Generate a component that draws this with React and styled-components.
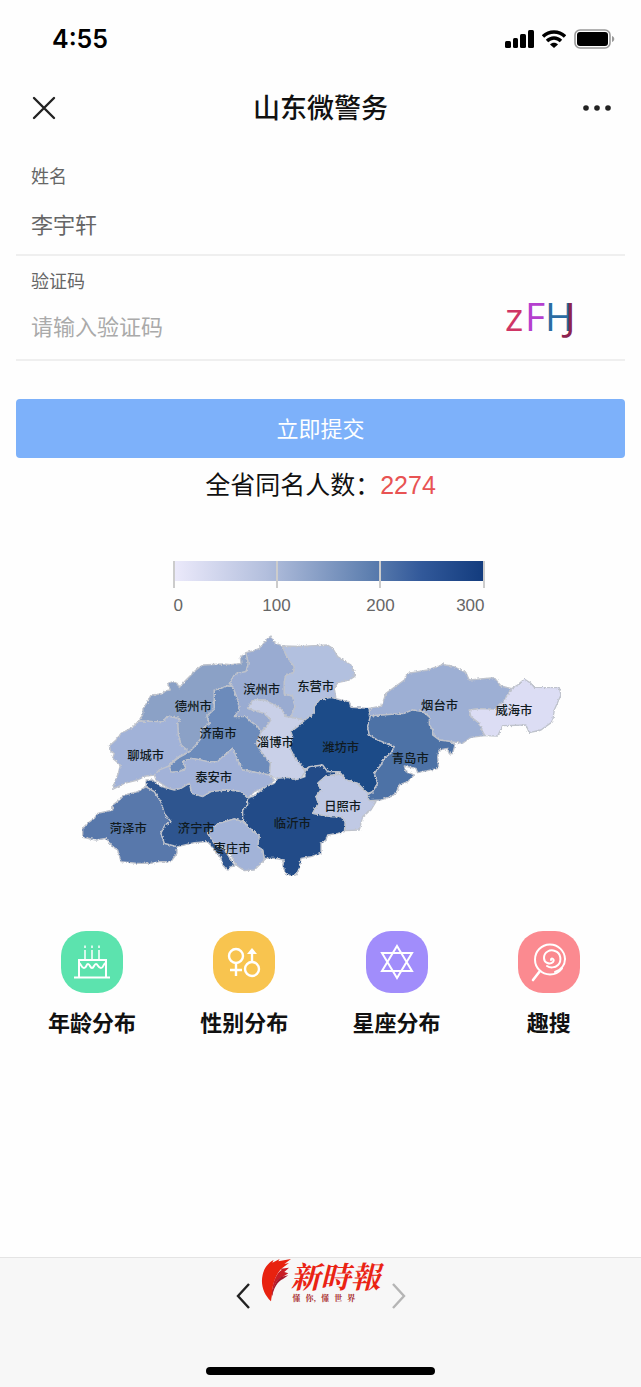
import React, { useState } from 'react';
import styled, { createGlobalStyle } from 'styled-components';

const GlobalStyle = createGlobalStyle`
  * {
    box-sizing: border-box;
  }
  body {
    margin: 0;
    background: #fefefe;
    color: #111;
    font-family: "Liberation Sans", "Noto Sans CJK SC", sans-serif;
  }
`;

const Page = styled.div`
  display: flex;
  flex-direction: column;
  min-height: 100vh;
`;

const StatusBar = styled.div`
  display: flex;
  justify-content: space-between;
  align-items: center;
  height: 78px;
  padding: 0 26px 0 52px;
`;

const Time = styled.span`
  font-family: Inter, "Liberation Sans", sans-serif;
  font-size: 25px;
  font-weight: 600;
  color: #000;
`;

const StatusIcons = styled.div`
  display: flex;
  align-items: center;
  gap: 8px;
`;

const NavBar = styled.header`
  display: grid;
  grid-template-columns: 60px 1fr 60px;
  align-items: center;
  height: 60px;
  padding: 0 14px;
`;

const Title = styled.h1`
  margin: 0;
  padding-top: 2px;
  font-size: 27px;
  font-weight: 500;
  line-height: 40px;
  text-align: center;
`;

const IconButton = styled.button`
  display: flex;
  align-items: center;
  justify-content: center;
  height: 44px;
  padding: 0;
  border: none;
  background: none;
  color: ${(props) => props.$color || '#222'};
  cursor: pointer;
`;

const Form = styled.form`
  margin-top: 13px;
  padding: 0 16px;
`;

const Field = styled.div`
  display: flex;
  align-items: center;
  padding: 12px 46px 10px 15px;
  border-bottom: 2px solid #efefef;
`;

const FieldBody = styled.div`
  display: flex;
  flex: 1;
  flex-direction: column;
  min-width: 0;
`;

const Label = styled.label`
  margin-bottom: 11px;
  font-size: 18px;
  line-height: 28px;
  color: #666;
`;

const Input = styled.input`
  width: 100%;
  height: 42px;
  padding: 0;
  border: none;
  outline: none;
  background: transparent;
  font-family: inherit;
  font-size: 22px;
  color: #666;
  &::placeholder {
    color: #aaa;
    opacity: 1;
  }
`;

const CaptchaButton = styled.button`
  display: block;
  padding: 0;
  border: none;
  background: none;
  cursor: pointer;
  svg {
    display: block;
  }
  text {
    font-family: "Open Sans", "Noto Sans", sans-serif;
    font-size: 39px;
    font-weight: 500;
  }
`;

const SubmitButton = styled.button`
  width: 100%;
  height: 59px;
  margin-top: 38px;
  padding: 0 0 4px;
  border: none;
  border-radius: 4px;
  background: #7db1fa;
  color: #fff;
  font-family: inherit;
  font-size: 22px;
  cursor: pointer;
`;

const Result = styled.p`
  margin: 0;
  font-size: 25px;
  line-height: 54px;
  text-align: center;
`;

const Count = styled.span`
  color: #e85353;
`;

const Legend = styled.div`
  width: 328px;
  margin: 49px auto 0;
  padding-left: 16px;
`;

const LegendBar = styled.div`
  display: grid;
  grid-template-columns: repeat(3, 1fr);
  height: 27px;
  border-right: 2px solid #ccc;
  background: linear-gradient(to right, #eceafb, #b3bfdd 30%, #5f80b0 63%, #32599a 80%, #133c7e) no-repeat 0 0 / 100% 20px;
`;

const LegendStep = styled.div`
  border-left: 2px solid #ccc;
`;

const LegendLabels = styled.div`
  display: grid;
  grid-template-columns: 1fr 2fr 2fr 1fr;
  margin-top: 6px;
  font-size: 17px;
  line-height: 24px;
  text-align: center;
  color: #666;
  span:first-child {
    padding-left: 1px;
    text-align: left;
  }
  span:last-child {
    text-align: right;
  }
`;

const Map = styled.svg`
  display: block;
  width: 78%;
  min-width: 300px;
  margin: 2px auto 0;
  text {
    font-family: "Noto Sans CJK SC", sans-serif;
    font-size: 37px;
    font-weight: 500;
    text-anchor: middle;
    fill: #101a20;
  }
`;

const Shortcuts = styled.nav`
  display: grid;
  grid-template-columns: repeat(4, 1fr);
  margin: 41px 0 60px;
  padding: 0 16px;
`;

const Shortcut = styled.a`
  display: flex;
  flex-direction: column;
  align-items: center;
  gap: 15px;
  color: #111;
  font-size: 22px;
  font-weight: 700;
  line-height: 32px;
  text-decoration: none;
`;

const ShortcutIcon = styled.span`
  display: flex;
  width: 62px;
  height: 62px;
  border-radius: 25px;
  background: ${(props) => props.$color};
`;

const BottomBar = styled.footer`
  display: flex;
  flex-direction: column;
  align-items: center;
  justify-content: space-between;
  height: 130px;
  margin-top: auto;
  padding-bottom: 12px;
  border-top: 1px solid #e4e4e4;
  background: #f7f7f7;
`;

const BottomNav = styled.div`
  display: flex;
  align-items: flex-start;
  justify-content: center;
  gap: 8px;
  ${IconButton} {
    width: 20px;
    margin-top: 16px;
  }
`;

const Logo = styled.div`
  display: flex;
  align-items: flex-start;
`;

const LogoText = styled.div`
  display: flex;
  flex-direction: column;
  align-items: flex-start;
  font-family: "Noto Serif CJK TC", "Noto Sans CJK TC", serif;
`;

const LogoName = styled.strong`
  font-size: 30px;
  font-style: italic;
  font-weight: 700;
  line-height: 34px;
  color: #ea2314;
`;

const LogoSlogan = styled.span`
  display: flex;
  gap: 5px;
  padding-left: 2px;
  font-size: 8px;
  font-weight: 700;
  line-height: 12px;
  color: #a82a2c;
`;

const HomeIndicator = styled.div`
  width: 229px;
  height: 8px;
  border-radius: 4px;
  background: #000;
`;

// outlines are in map units, 3 per css pixel at full width
const cities = [
  { name: '德州市', x: 367, y: 272, color: '#8ba1c6', points: '525,98 508,112 510,130 480,134 455,132 395,135 375,150 345,180 325,203 318,190 306,185 290,190 298,210 285,212 272,222 240,225 230,245 216,265 215,285 203,303 250,305 275,305 290,288 328,297 320,310 322,345 330,375 355,396 375,375 390,355 390,330 415,310 408,288 430,268 430,210 450,205 470,198 485,200 475,190 490,165 500,160 525,155 532,130' },
  { name: '聊城市', x: 224, y: 420, color: '#a1b2d8', points: '203,303 185,322 150,340 135,360 115,378 120,395 130,400 125,415 148,435 142,460 130,490 125,508 160,490 200,480 225,468 250,465 290,440 320,412 355,396 330,375 322,345 320,310 328,297 290,288 275,305 250,305' },
  { name: '滨州市', x: 572, y: 221, color: '#99abd1', points: '525,98 545,93 565,85 580,68 590,55 600,48 610,68 635,78 645,105 655,120 670,140 668,158 645,165 640,185 640,222 665,228 672,260 660,292 645,290 630,265 600,250 580,240 545,240 530,265 560,275 580,280 600,300 590,315 570,337 560,320 540,305 525,290 490,290 490,275 505,270 500,240 485,200 475,190 490,165 500,160 525,155 532,130' },
  { name: '东营市', x: 734, y: 212, color: '#b2c0df', points: '635,78 690,79 770,75 785,85 800,110 840,135 850,155 850,170 835,180 800,188 790,205 795,235 780,232 745,240 730,260 730,280 702,300 660,292 672,260 665,228 640,222 640,185 645,165 668,158 670,140 655,120 645,105' },
  { name: '淄博市', x: 613, y: 382, color: '#c9d0e8', points: '545,240 580,240 600,250 630,265 645,290 660,292 702,300 680,320 660,335 665,350 655,380 670,410 695,440 702,455 690,475 675,480 650,472 630,482 595,465 598,430 570,395 555,370 570,337 590,315 600,300 580,280 560,275 530,265' },
  { name: '济南市', x: 441, y: 354, color: '#6c8bbb', points: '485,200 470,198 450,205 430,210 430,268 408,288 415,310 390,330 390,355 375,375 355,396 325,412 300,432 295,440 300,457 325,455 345,445 335,425 360,415 380,418 410,425 440,425 455,410 485,385 500,420 515,450 570,460 595,465 598,430 570,395 555,370 570,337 560,320 540,305 525,290 490,290 505,270 500,240' },
  { name: '泰安市', x: 428, y: 485, color: '#a2b2d8', points: '250,465 265,450 290,440 295,440 300,457 325,455 345,445 335,425 360,415 380,418 410,425 440,425 455,410 485,385 500,420 515,450 570,460 595,465 610,480 590,500 550,515 530,535 510,515 470,510 420,515 395,530 362,520 355,490 330,505 300,510 255,480' },
  { name: '菏泽市', x: 172, y: 638, color: '#5878ab', points: '225,500 200,515 160,525 145,540 125,555 125,570 80,580 70,595 50,610 35,625 35,652 75,660 105,655 125,680 140,690 150,725 200,730 240,730 265,725 300,725 318,700 318,680 280,670 270,640 282,615 300,605 280,580 270,545 250,515' },
  { name: '济宁市', x: 376, y: 638, color: '#2d558f', points: '225,480 245,480 270,500 310,510 330,505 355,490 362,520 395,530 420,515 470,510 510,515 530,535 530,555 515,570 515,605 490,597 440,612 410,640 430,670 460,690 492,738 480,740 470,752 455,735 450,715 430,690 410,665 370,668 320,680 280,670 270,640 282,615 300,605 280,580 270,545 250,515 225,500' },
  { name: '临沂市', x: 664, y: 625, color: '#214c88', points: '530,535 545,530 585,500 610,490 620,475 650,472 675,480 702,470 702,455 715,440 755,435 770,455 805,455 790,465 765,468 740,490 750,510 735,530 742,550 725,580 780,590 810,590 823,605 820,635 800,640 770,645 765,660 750,670 750,700 720,710 690,715 685,745 675,765 660,768 643,760 635,735 640,720 610,715 580,715 575,690 560,680 565,645 555,640 530,620 515,595 515,570 530,555' },
  { name: '潍坊市', x: 809, y: 397, color: '#1f4b88', points: '730,260 745,240 780,232 810,240 835,245 840,262 895,265 900,290 890,320 895,345 920,360 970,380 960,400 940,415 930,435 910,460 920,490 905,515 890,520 860,490 825,480 805,455 770,455 755,435 715,440 702,450 670,410 655,380 665,350 660,335 680,320 702,300 730,280' },
  { name: '日照市', x: 815, y: 574, color: '#c0c9e4', points: '765,468 790,465 810,462 825,480 860,490 870,505 892,520 890,535 915,545 900,570 875,590 865,630 823,632 823,605 810,590 780,590 725,580 742,550 735,530 750,510 740,490' },
  { name: '枣庄市', x: 483, y: 699, color: '#a2b3d8', points: '440,612 490,597 515,605 530,620 555,640 565,645 560,680 575,690 580,720 550,750 520,752 495,735 480,705 460,680 430,670 410,640' },
  { name: '烟台市', x: 1106, y: 271, color: '#9dafd4', points: '895,265 932,258 945,220 1000,180 1010,160 1070,150 1113,135 1116,128 1120,135 1145,138 1185,158 1195,180 1270,173 1290,198 1322,206 1300,240 1275,268 1225,266 1195,270 1200,290 1225,310 1235,335 1242,347 1200,352 1175,370 1140,365 1105,360 1085,345 1085,330 1075,315 1075,290 1055,275 1025,270 1000,280 895,288' },
  { name: '青岛市', x: 1018, y: 429, color: '#4d72a6', points: '898,288 1000,280 1025,270 1055,275 1075,290 1075,315 1085,330 1085,345 1105,360 1140,365 1152,375 1145,400 1135,402 1130,385 1105,390 1100,410 1103,445 1040,458 1035,445 1000,438 1005,455 1030,465 1010,485 985,495 975,520 960,530 930,540 895,542 890,525 905,515 920,490 910,460 930,435 940,415 960,400 970,380 920,360 895,345 890,320' },
  { name: '威海市', x: 1329, y: 285, color: '#dcddf4', points: '1322,206 1340,195 1360,177 1380,190 1390,202 1465,203 1470,225 1450,270 1445,305 1410,330 1375,338 1365,315 1295,317 1280,348 1242,347 1235,335 1225,310 1200,290 1195,270 1225,266 1275,268 1300,240' },
];

const CakeIcon = () => (
  <svg width="62" height="62" viewBox="0 0 62 62" fill="none" stroke="#fff" strokeWidth="2">
    <path d="M13 46.500h36M18 46V29h27v17" />
    <path d="M18 32c2 0 2 5 5 5s2-4 4-4 2 4 4 4 2-4 4-4 2 4 5 4 2-5 5-5" />
    <path d="M24 19v9M31 19v9M38 19v9M24 14.500v2.500M31 14.500v2.500M38 14.500v2.500" strokeWidth="1.500" />
  </svg>
);

const GenderIcon = () => (
  <svg width="62" height="62" viewBox="0 0 62 62" fill="none" stroke="#fff" strokeWidth="2.400">
    <circle cx="23" cy="25" r="7" />
    <path d="M23 32v13M17 39h12" />
    <circle cx="39" cy="38" r="7" />
    <path d="M39 31V21" />
    <path d="M34 23l5-6 5 6z" fill="#fff" stroke="none" />
  </svg>
);

const StarIcon = () => (
  <svg width="62" height="62" viewBox="0 0 62 62" fill="none" stroke="#fff" strokeWidth="2">
    <path d="M31 15l15 25H16zM31 47L16 22h30z" />
  </svg>
);

const LollipopIcon = () => (
  <svg width="62" height="62" viewBox="0 0 62 62" fill="none" stroke="#fff" strokeWidth="2" strokeLinecap="round">
    <path d="M47 28a15 15 0 1 0-15 15.500c5 0 9-2 12-6" />
    <path d="M22 40l-7 9" strokeWidth="2.600" />
    <path d="M33 29c0-3 4-1 2 2-3 3-9 1-9-4 0-6 6-9 11-7 6 2 7 10 3 14-3 3-8 3-11 1" />
    <path d="M47 28c0 6-4 11-10 13" />
  </svg>
);

const shortcuts = [
  { name: '年龄分布', color: '#5ce3ae', icon: <CakeIcon /> },
  { name: '性别分布', color: '#f8c44f', icon: <GenderIcon /> },
  { name: '星座分布', color: '#a18dfb', icon: <StarIcon /> },
  { name: '趣搜', color: '#fb8a90', icon: <LollipopIcon /> },
];

const Feather = () => (
  <svg width="30" height="46" viewBox="0 0 90 138">
    <path fill="#e8220f" d="M30 130C8 108-2 80 5 50 10 28 25 12 38 6l-4 8L56 3l-4 7L90 3 70 18l14-3-20 15C46 44 34 80 34 100z" />
    <path fill="#c81c24" d="M32 112c2-42 16-68 30-76l-3-4 25-3-14 13 12 4-16 10c-20 6-28 28-32 56z" />
    <path fill="#a5182c" d="M32 120c2-35 16-58 30-64l20-4-16 11c-16 6-28 27-34 57z" />
  </svg>
);

const StatusGlyphs = () => (
  <StatusIcons>
    <svg width="29" height="18" viewBox="0 0 29 18">
      <rect x="0" y="11" width="6" height="7" rx="1.500" />
      <rect x="8" y="8" width="5" height="10" rx="1.500" />
      <rect x="15" y="4" width="6" height="14" rx="1.500" />
      <rect x="23" y="0" width="6" height="18" rx="1.500" />
    </svg>
    <svg width="24" height="18" viewBox="0 0 24 18" fill="none" stroke="#000" strokeWidth="3.400">
      <path d="M1 6.500C7 0.500 17 0.500 23 6.500" />
      <path d="M5 11c4-4 10-4 14 0" />
      <path d="M12 18l-4-3.500c2-2.400 6-2.400 8 0z" fill="#000" stroke="none" />
    </svg>
    <svg width="41" height="20" viewBox="0 0 41 20">
      <rect x="1" y="1" width="35" height="18" rx="5" fill="none" stroke="#999" strokeWidth="1.600" />
      <rect x="3" y="3" width="31" height="14" rx="3" />
      <path d="M38 7c3 1 3 5 0 6z" fill="#999" />
    </svg>
  </StatusIcons>
);

const App = () => {
  const [name, setName] = useState('李宇轩');
  const [code, setCode] = useState('');

  const handleSubmit = (e) => {
    e.preventDefault();
  };

  return (
    <Page>
      <GlobalStyle />
      <StatusBar>
        <Time>4:55</Time>
        <StatusGlyphs />
      </StatusBar>

      <NavBar>
        <IconButton aria-label="关闭">
          <svg width="24" height="24" viewBox="0 0 24 24" stroke="currentColor" strokeWidth="2.400" strokeLinecap="round">
            <path d="M2 2l20 20M22 2L2 22" />
          </svg>
        </IconButton>
        <Title>山东微警务</Title>
        <IconButton aria-label="更多">
          <svg width="28" height="6" viewBox="0 0 28 6" fill="currentColor">
            <circle cx="3" cy="3" r="2.800" />
            <circle cx="14" cy="3" r="2.800" />
            <circle cx="25" cy="3" r="2.800" />
          </svg>
        </IconButton>
      </NavBar>

      <Form onSubmit={handleSubmit}>
        <Field>
          <FieldBody>
            <Label htmlFor="name">姓名</Label>
            <Input id="name" type="text" value={name} onChange={(e) => setName(e.target.value)} />
          </FieldBody>
        </Field>
        <Field>
          <FieldBody>
            <Label htmlFor="code">验证码</Label>
            <Input
              id="code"
              type="text"
              placeholder="请输入验证码"
              value={code}
              onChange={(e) => setCode(e.target.value)}
            />
          </FieldBody>
          <CaptchaButton type="button" aria-label="换一张">
            <svg width="74" height="78" viewBox="0 0 74 78">
              <text x="0" y="61" fill="#cf3565">z</text>
              <text x="20" y="61" fill="#b53fce">F</text>
              <text x="40" y="61" fill="#2a6ca3">H</text>
              <text x="60" y="61" fill="#8c2350">J</text>
            </svg>
          </CaptchaButton>
        </Field>
        <SubmitButton type="submit">立即提交</SubmitButton>
      </Form>

      <Result>
        全省同名人数：<Count>2274</Count>
      </Result>

      <Legend>
        <LegendBar>
          <LegendStep />
          <LegendStep />
          <LegendStep />
        </LegendBar>
        <LegendLabels>
          <span>0</span>
          <span>100</span>
          <span>200</span>
          <span>300</span>
        </LegendLabels>
      </Legend>

      <Map viewBox="0 0 1500 810">
        <defs>
          {/* roughens the county borders */}
          <filter id="rough" x="0" y="0" width="100%" height="100%">
            <feTurbulence type="fractalNoise" baseFrequency="0.16" numOctaves="2" seed="4" />
            <feDisplacementMap in="SourceGraphic" scale="9" xChannelSelector="R" yChannelSelector="G" />
          </filter>
        </defs>
        <g stroke="#bfc3cc" strokeWidth="4" strokeLinejoin="round" filter="url(#rough)">
          {cities.map((city) => (
            <polygon key={city.name} points={city.points} fill={city.color} />
          ))}
        </g>
        {cities.map((city) => (
          <text key={city.name} x={city.x} y={city.y}>{city.name}</text>
        ))}
      </Map>

      <Shortcuts>
        {shortcuts.map((item) => (
          <Shortcut key={item.name} href="#">
            <ShortcutIcon $color={item.color}>{item.icon}</ShortcutIcon>
            {item.name}
          </Shortcut>
        ))}
      </Shortcuts>

      <BottomBar>
        <BottomNav>
          <IconButton aria-label="后退">
            <svg width="14" height="26" viewBox="0 0 14 26" fill="none" stroke="currentColor" strokeWidth="2.400">
              <path d="M13 1L2 13l11 12" />
            </svg>
          </IconButton>
          <Logo>
            <Feather />
            <LogoText>
              <LogoName>新時報</LogoName>
              <LogoSlogan>
                <span>懂</span>
                <span>你,</span>
                <span>懂</span>
                <span>世</span>
                <span>界</span>
              </LogoSlogan>
            </LogoText>
          </Logo>
          <IconButton aria-label="前进" $color="#b5b5b5">
            <svg width="14" height="26" viewBox="0 0 14 26" fill="none" stroke="currentColor" strokeWidth="2.400">
              <path d="M1 1l11 12L1 25" />
            </svg>
          </IconButton>
        </BottomNav>
        <HomeIndicator />
      </BottomBar>
    </Page>
  );
};

export default App;
